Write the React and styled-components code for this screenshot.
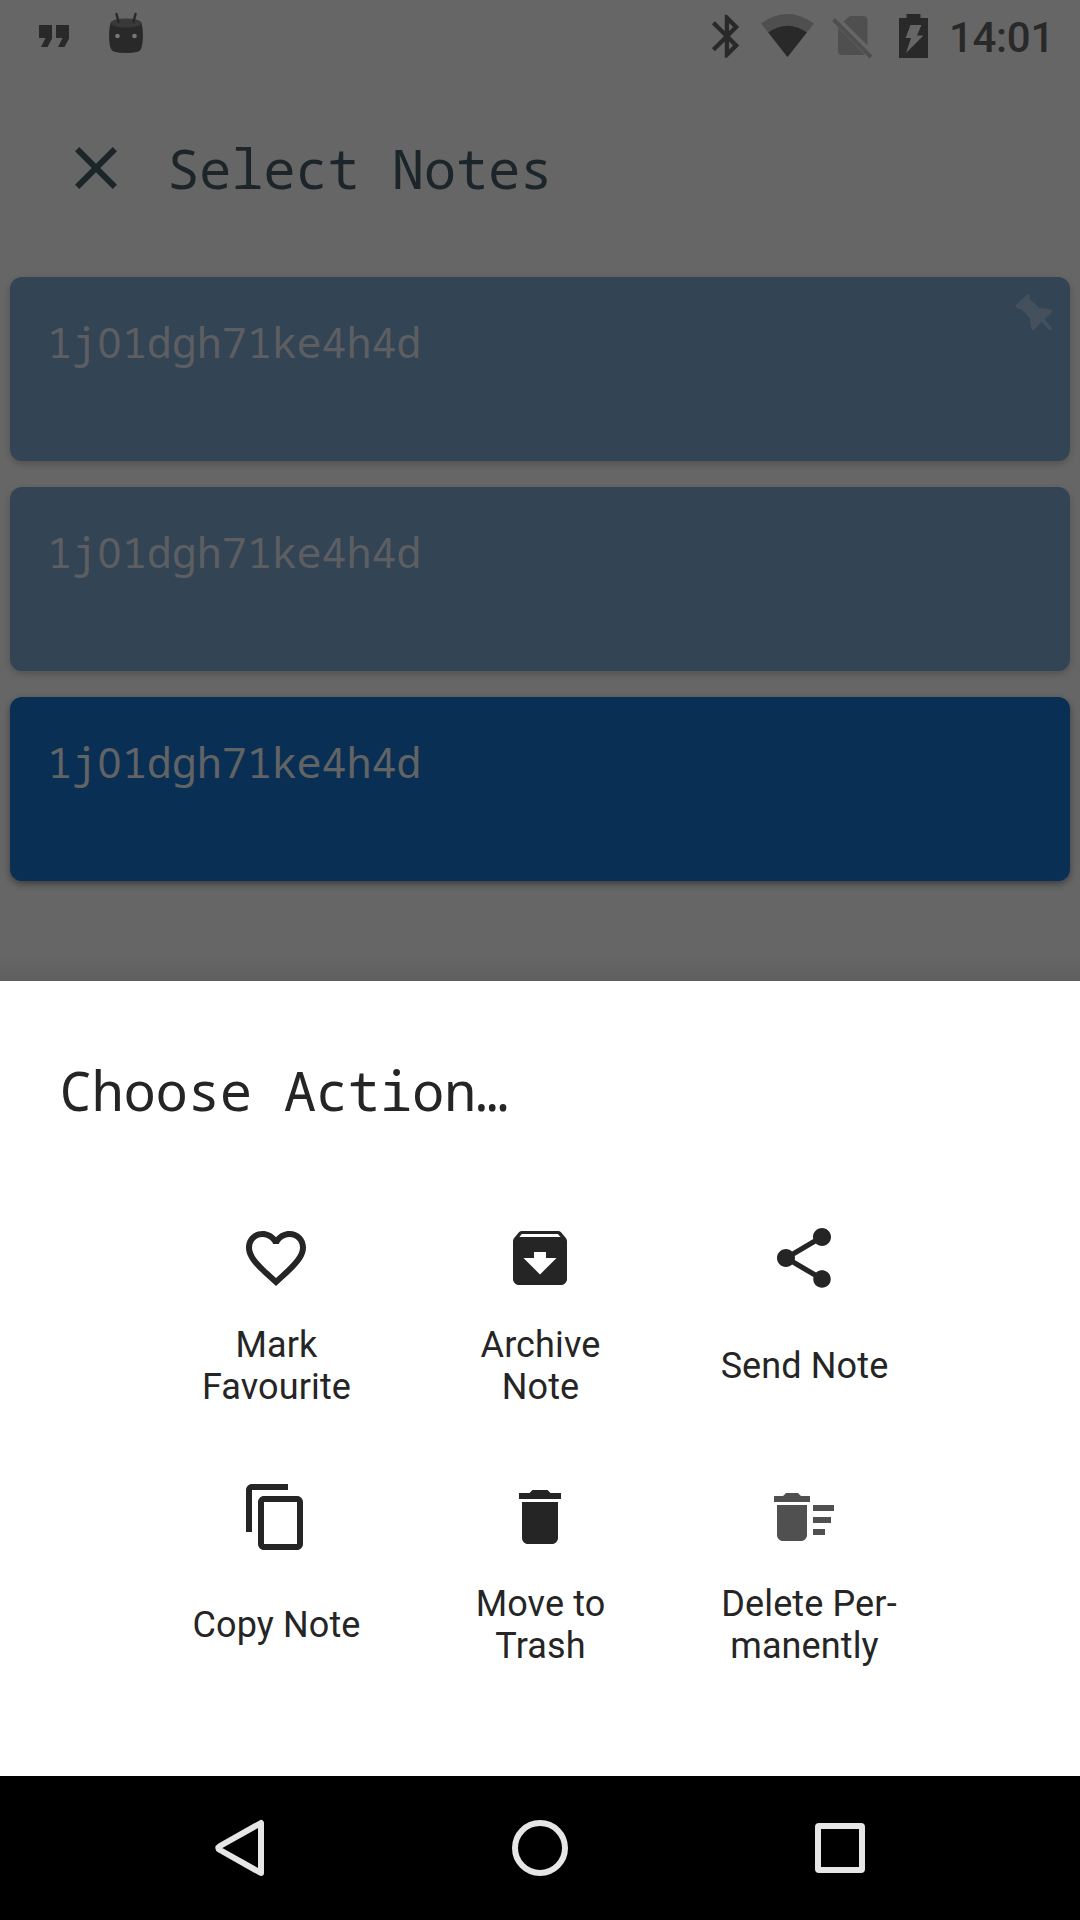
import React from "react";
import styled, { createGlobalStyle } from "styled-components";

const mono = `"Droid Sans Mono", "Noto Sans Mono", "DejaVu Sans Mono", monospace`;

const GlobalStyle = createGlobalStyle`
  * { box-sizing: border-box; }
  body { margin: 0; background: #666; }
`;

const Screen = styled.div`
  width: 1080px;
  height: 1920px;
  display: flex;
  flex-direction: column;
  overflow: hidden;
  background: #666;
  font-family: Roboto, sans-serif;
`;

const Backdrop = styled.div`
  height: 981px;
  display: flex;
  flex-direction: column;
  background: linear-gradient(to bottom, transparent 955px, rgba(0, 0, 0, 0.07) 981px);
`;

const StatusBar = styled.div`
  height: 72px;
  display: flex;
  justify-content: space-between;
  color: #292929;
`;

const StatusGroup = styled.div`
  display: flex;
  align-items: center;
`;

const Clock = styled.span`
  margin-right: 26px;
  margin-left: 9px;
  padding-top: 4px;
  font-size: 42px;
  line-height: 48px;
  font-weight: 500;
  letter-spacing: -0.3px;
`;

const AppBar = styled.header`
  height: 192px;
  display: flex;
  align-items: center;
  padding-left: 60px;
  gap: 35px;
  color: #1c2529;
`;

const Title = styled.h1`
  margin: 0;
  font: 400 54px/72px ${mono};
  letter-spacing: -0.3px;
`;

const Notes = styled.main`
  display: flex;
  flex-direction: column;
  gap: 26px;
  padding: 13px 10px;
`;

const Note = styled.article`
  height: 184px;
  display: flex;
  justify-content: space-between;
  padding: 40px 17px 0 37px;
  border-radius: 12px;
  background: ${(p) => (p.$selected ? "#0a2f54" : "#334455")};
  color: ${(p) => (p.$selected ? "#616365" : "#5c5e61")};
  box-shadow: 0 3px 7px rgba(0, 0, 0, ${(p) => (p.$selected ? 0.4 : 0.2)});
`;

const NoteText = styled.p`
  margin: 0;
  font: 400 42px/50px ${mono};
  letter-spacing: -0.25px;
`;

const PlainZero = styled.span`
  display: inline-block;
  width: 25px;
  height: 50px;
  vertical-align: top;
  text-align: center;
  letter-spacing: 0;
  font-family: "Noto Sans", sans-serif;
`;

const Pin = styled.svg`
  margin-top: -23px;
  width: 37px;
  height: 37px;
  fill: #44515d;
`;

const Sheet = styled.section`
  height: 795px;
  padding-top: 73px;
  background: #fff;
  color: #252525;
`;

const SheetTitle = styled.h2`
  margin: 0 0 96px 59.500px;
  font: 400 54px/72px ${mono};
  letter-spacing: -0.36px;
`;

const Actions = styled.div`
  display: grid;
  grid-template-columns: repeat(3, 264px);
  grid-auto-rows: 259px;
  justify-content: center;
`;

const Action = styled.button`
  display: flex;
  flex-direction: column;
  align-items: center;
  gap: 30px;
  padding: 0;
  border: 0;
  background: none;
  color: inherit;
  font: 400 36px/42px Roboto, sans-serif;
`;

const Label = styled.span`
  height: 84px;
  padding-left: 1px;
  display: flex;
  align-items: center;
  text-align: center;
  white-space: pre;
  letter-spacing: 0.12px;
`;

const NavBar = styled.nav`
  height: 144px;
  background: #000;
  display: flex;
  justify-content: center;
  gap: 228px;
  align-items: center;
`;

const Icon = ({ d, size = 72, color = "currentColor" }) => (
  <svg width={size} height={size} viewBox="0 0 24 24" fill={color} aria-hidden="true">
    <path d={d} />
  </svg>
);

const icons = {
  close: "M19 6.41L17.59 5 12 10.59 6.41 5 5 6.41 10.59 12 5 17.59 6.41 19 12 13.41 17.59 19 19 17.59 13.41 12z",
  heart: "M16.5 3c-1.74 0-3.41.81-4.5 2.09C10.91 3.81 9.24 3 7.5 3 4.42 3 2 5.42 2 8.5c0 3.78 3.4 6.86 8.55 11.54L12 21.35l1.45-1.32C18.6 15.36 22 12.28 22 8.5 22 5.42 19.58 3 16.5 3zm-4.4 15.55l-.1.1-.1-.1C7.14 14.24 4 11.39 4 8.5 4 6.5 5.5 5 7.5 5c1.54 0 3.04.99 3.57 2.36h1.87C13.46 5.99 14.96 5 16.5 5c2 0 3.5 1.5 3.5 3.5 0 2.89-3.14 5.74-7.9 10.05z",
  archive: "M20.54 5.23l-1.39-1.68C18.88 3.21 18.47 3 18 3H6c-.47 0-.88.21-1.16.55L3.46 5.23C3.17 5.57 3 6.02 3 6.5V19c0 1.1.9 2 2 2h14c1.1 0 2-.9 2-2V6.5c0-.48-.17-.93-.46-1.27zM12 17.5L6.5 12H10v-2h4v2h3.5L12 17.5zM5.12 5l.81-1h12l.94 1H5.12z",
  share: "M18 16.08c-.76 0-1.44.3-1.96.77L8.91 12.7c.05-.23.09-.46.09-.7s-.04-.47-.09-.7l7.05-4.11c.54.5 1.25.81 2.04.81 1.66 0 3-1.34 3-3s-1.34-3-3-3-3 1.34-3 3c0 .24.04.47.09.7L8.04 9.81C7.5 9.31 6.79 9 6 9c-1.66 0-3 1.34-3 3s1.34 3 3 3c.79 0 1.5-.31 2.04-.81l7.12 4.16c-.05.21-.08.43-.08.65 0 1.61 1.31 2.92 2.92 2.92s2.92-1.31 2.92-2.92-1.31-2.92-2.92-2.92z",
  copy: "M16 1H4c-1.1 0-2 .9-2 2v14h2V3h12V1zm3 4H8c-1.1 0-2 .9-2 2v14c0 1.1.9 2 2 2h11c1.1 0 2-.9 2-2V7c0-1.1-.9-2-2-2zm0 16H8V7h11v14z",
  trash: "M6 19c0 1.1.9 2 2 2h8c1.1 0 2-.9 2-2V7H6v12zM19 4h-3.5l-1-1h-5l-1 1H5v2h14V4z",
  sweep: "M15 16h4v2h-4zm0-8h7v2h-7zm0 4h6v2h-6zM3 18c0 1.1.9 2 2 2h6c1.1 0 2-.9 2-2V8H3v10zM14 5h-3l-1-1H6L5 5H2v2h12z",
};

const actions = [
  { icon: "heart", label: "Mark\nFavourite" },
  { icon: "archive", label: "Archive\nNote" },
  { icon: "share", label: "Send Note" },
  { icon: "copy", label: "Copy Note" },
  { icon: "trash", label: "Move to\nTrash" },
  { icon: "sweep", label: " Delete Per-\nmanently", color: "#505050" },
];

const notes = [
  { id: 1, text: "1j01dgh71ke4h4d", pinned: true },
  { id: 2, text: "1j01dgh71ke4h4d" },
  { id: 3, text: "1j01dgh71ke4h4d", selected: true },
];

// The monospace face slashes its zeros, so they are set in the proportional face.
const withPlainZeros = (text) =>
  text.split(/(0)/).map((part, i) => (part === "0" ? <PlainZero key={i}>0</PlainZero> : part));

const Notifications = () => (
  <svg width="160" height="72" viewBox="0 0 160 72" fill="#292929">
    <path d="M39 25H52V38.5L47.5 47H41L45.5 38H39zM56 25H69V38.5L64.5 47H58L62.500 38H56z" />
    <path d="M110.500 23C108.500 31 108.500 43 111 49Q112 53 126 53T141 49C143.500 43 143.500 31 141.500 23Z" />
    <ellipse cx="126" cy="23" rx="15.500" ry="4.500" fill="#393939" />
    <path d="M116.500 14l2 8M135.500 14l-2 8" stroke="#292929" strokeWidth="2.400" strokeLinecap="round" />
    <circle cx="117.500" cy="36" r="2.300" fill="#777" />
    <circle cx="134.500" cy="36" r="2.300" fill="#777" />
  </svg>
);

const SystemIcons = () => (
  <svg width="250" height="72" viewBox="690 0 250 72" fill="#292929">
    <path
      transform="translate(701.1 10.500) scale(2.150)"
      d="M17.710 7.710L12 2h-1v7.590L6.410 5 5 6.410 10.590 12 5 17.590 6.410 19 11 14.410V22h1l5.710-5.710-4.300-4.290 4.300-4.290zM13 5.830l1.880 1.880L13 9.590V5.830zm1.880 10.460L13 18.170v-3.760l1.880 1.880z"
    />
    <path d="M787.500 57L761 23.500Q787.500 4.500 814 23.500z" fill="#4f4f4f" />
    <path d="M787.500 57L768.300 32.500Q787.500 19 806.800 32.500z" />
    <path d="M850 16H863Q867.500 16 867.500 20.500V45.500L843.500 21.500zM838 27.500L864.500 54.300Q864 55 862 55H842Q838 55 838 51z" fill="#4f4f4f" />
    <path d="M833.500 19.500L871 57" stroke="#4f4f4f" strokeWidth="4" />
    <path d="M906.500 14H920.500V18H928V58H899V18H906.500z" />
    <path d="M910.500 25H921.500L917 35.500H923.500L906 53L911 38H905.500z" fill="#666" />
  </svg>
);

export default function App() {
  return (
    <Screen>
      <GlobalStyle />
      <Backdrop>
        <StatusBar>
          <StatusGroup><Notifications /></StatusGroup>
          <StatusGroup>
            <SystemIcons />
            <Clock>14:01</Clock>
          </StatusGroup>
        </StatusBar>
        <AppBar>
          <Icon d={icons.close} />
          <Title>Select Notes</Title>
        </AppBar>
        <Notes>
          {notes.map((n) => (
            <Note key={n.id} $selected={n.selected}>
              <NoteText>{withPlainZeros(n.text)}</NoteText>
              {n.pinned && (
                <Pin viewBox="228 104 111 111">
                  <path d="M262 104Q269 104 271 112L268 118L299 147Q322 146 336 153Q337 156 334 160L314 180L335 205Q338 213 330 213L304 189L282 211Q278 214 276 212Q268 195 271 179L243 149Q232 149 228 142Q227 138 230 135Z" />
                </Pin>
              )}
            </Note>
          ))}
        </Notes>
      </Backdrop>
      <Sheet>
        <SheetTitle>Choose Action…</SheetTitle>
        <Actions>
          {actions.map((a) => (
            <Action key={a.icon}>
              <Icon d={icons[a.icon]} color={a.color} />
              <Label>{a.label}</Label>
            </Action>
          ))}
        </Actions>
      </Sheet>
      <NavBar>
        <svg width="72" height="72" viewBox="0 0 72 72" fill="none" stroke="#e6e6e6" strokeWidth="6" strokeLinejoin="round">
          <path d="M57 11V61L16 38Q12.500 36 16 34z" />
        </svg>
        <svg width="72" height="72" viewBox="0 0 72 72" fill="none" stroke="#e6e6e6" strokeWidth="6">
          <circle cx="36" cy="36" r="25" />
        </svg>
        <svg width="72" height="72" viewBox="0 0 72 72" fill="none" stroke="#e6e6e6" strokeWidth="6">
          <rect x="14" y="14" width="44" height="44" rx="1" />
        </svg>
      </NavBar>
    </Screen>
  );
}
